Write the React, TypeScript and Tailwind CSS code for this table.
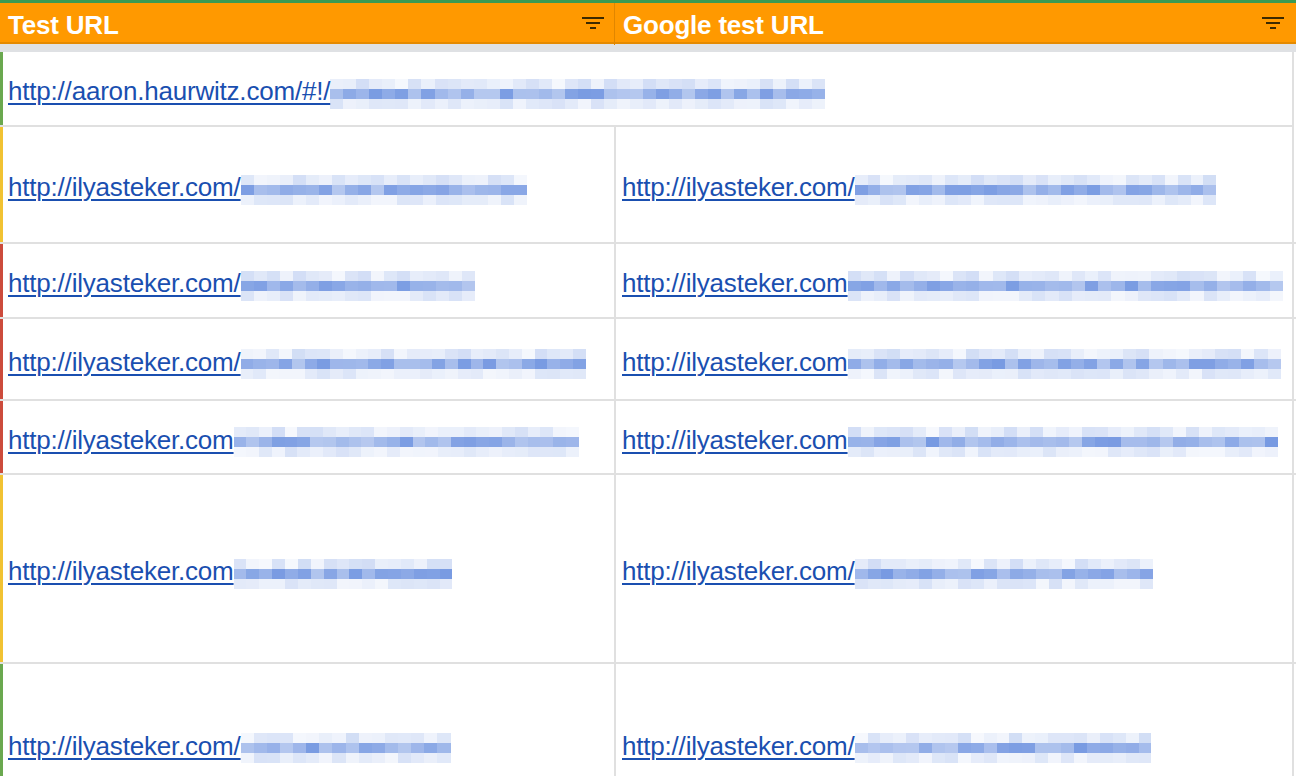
import React from 'react';

// pseudo-random mosaic so the blurred part of each url looks pixelated
function rand(seed: number) {
  let s = seed;
  return () => {
    s = (s * 9301 + 49297) % 233280;
    return s / 233280;
  };
}

function Mosaic({ width, seed }: { width: number; seed: number }) {
  const r = rand(seed);
  const cols = Math.round(width / 13);
  const blocks = Array.from({ length: cols }, () => ({
    top: 0.05 + r() * 0.2,
    mid: 0.4 + r() * 0.35,
    bot: 0.06 + r() * 0.16,
  }));
  return (
    <span className="inline-flex flex-col align-middle mt-1" style={{ width }}>
      {(['top', 'mid', 'bot'] as const).map((band) => (
        <span key={band} className="flex h-[10px]">
          {blocks.map((b, i) => (
            <span
              key={i}
              className="flex-1 bg-[#4a78d8]"
              style={{ opacity: b[band] }}
            />
          ))}
        </span>
      ))}
    </span>
  );
}

function Url({ text, blur, seed }: { text: string; blur: number; seed: number }) {
  return (
    <span className="inline-flex items-center whitespace-nowrap">
      <span className="text-[#1a4fb0] underline underline-offset-[3px] decoration-[1.5px]">{text}</span>
      <Mosaic width={blur} seed={seed} />
    </span>
  );
}

function FilterIcon() {
  return (
    <svg width="22" height="14" viewBox="0 0 22 14" className="text-[#3c2a00]">
      <rect x="0" y="0" width="22" height="2" fill="currentColor" />
      <rect x="4" y="5" width="14" height="2" fill="currentColor" />
      <rect x="8" y="10" width="6" height="2" fill="currentColor" />
    </svg>
  );
}

const rows = [
  { h: 'h-[117px]', stripe: 'bg-[#f1c232]', left: ['http://ilyasteker.com/', 286], right: ['http://ilyasteker.com/', 362] },
  { h: 'h-[75px]', stripe: 'bg-[#cc4b3c]', left: ['http://ilyasteker.com/', 234], right: ['http://ilyasteker.com', 435] },
  { h: 'h-[82px]', stripe: 'bg-[#cc4b3c]', left: ['http://ilyasteker.com/', 345], right: ['http://ilyasteker.com', 433] },
  { h: 'h-[74px]', stripe: 'bg-[#cc4b3c]', left: ['http://ilyasteker.com', 345], right: ['http://ilyasteker.com', 430] },
  { h: 'h-[189px]', stripe: 'bg-[#f1c232]', left: ['http://ilyasteker.com', 219], right: ['http://ilyasteker.com/', 298] },
  { h: 'h-[160px]', stripe: 'bg-[#6aa84f]', left: ['http://ilyasteker.com/', 210], right: ['http://ilyasteker.com/', 297] },
] as const;

export default function App() {
  return (
    <div className="w-[1296px] h-[776px] overflow-hidden bg-white font-['Liberation_Sans',Arial,sans-serif] text-[26px] tracking-[-0.2px]">
      {/* header */}
      <div className="h-[3px] bg-[#3b9a52]" />
      <div className="grid grid-cols-[615px_1fr] h-[41px] bg-[#ff9900] border-b-2 border-[#e58a00]">
        <div className="flex items-center justify-between pl-2 pr-[10px] border-r border-[#e08600]">
          <span className="font-bold text-white pt-[3px]">Test URL</span>
          <FilterIcon />
        </div>
        <div className="flex items-center justify-between pl-2 pr-[12px]">
          <span className="font-bold text-white pt-[3px]">Google test URL</span>
          <FilterIcon />
        </div>
      </div>
      <div className="h-[8px] bg-[#dfe1e4]" />

      {/* merged first row */}
      <div className="flex h-[75px] border-b-2 border-[#e0e0e0] border-r-2 mr-[2px]">
        <div className="w-[3px] bg-[#6aa84f]" />
        <div className="flex items-center pl-[5px] pt-[6px]">
          <Url text="http://aaron.haurwitz.com/#!/" blur={495} seed={3} />
        </div>
      </div>

      {rows.map((row, i) => (
        <div key={i} className={`flex ${row.h} border-b-2 border-[#e0e0e0]`}>
          <div className={`w-[3px] ${row.stripe}`} />
          <div className="grid grid-cols-[613px_1fr] flex-1 border-r-2 border-[#e0e0e0] mr-[2px]">
            <div className="flex items-center pl-[5px] pt-[6px] border-r-2 border-[#e0e0e0]">
              <Url text={row.left[0]} blur={row.left[1]} seed={i * 7 + 11} />
            </div>
            <div className="flex items-center pl-[6px] pt-[6px]">
              <Url text={row.right[0]} blur={row.right[1]} seed={i * 13 + 5} />
            </div>
          </div>
        </div>
      ))}
    </div>
  );
}
